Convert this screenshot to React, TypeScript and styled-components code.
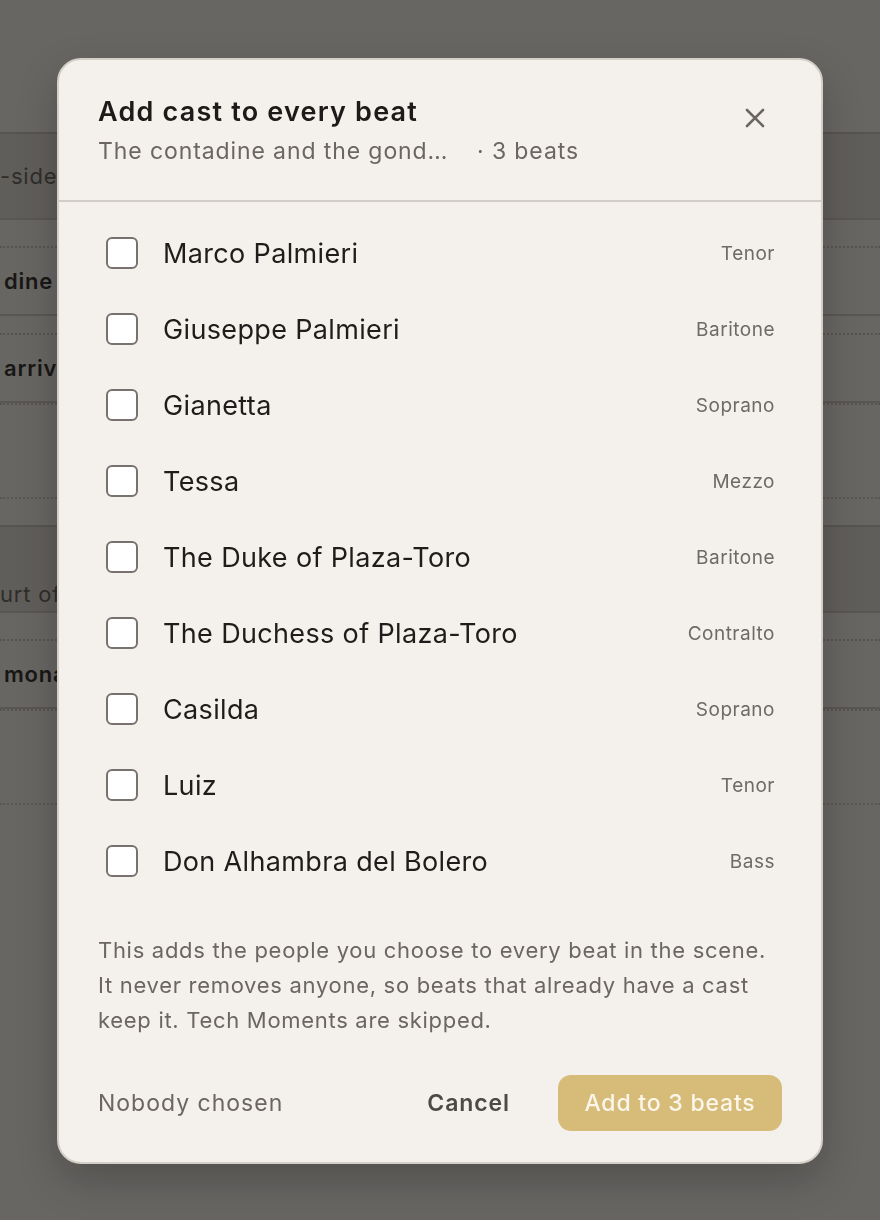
import React from "react";
import styled, { createGlobalStyle } from "styled-components";

type Person = { name: string; voice: string };

const cast: Person[] = [
  { name: "Marco Palmieri", voice: "Tenor" },
  { name: "Giuseppe Palmieri", voice: "Baritone" },
  { name: "Gianetta", voice: "Soprano" },
  { name: "Tessa", voice: "Mezzo" },
  { name: "The Duke of Plaza-Toro", voice: "Baritone" },
  { name: "The Duchess of Plaza-Toro", voice: "Contralto" },
  { name: "Casilda", voice: "Soprano" },
  { name: "Luiz", voice: "Tenor" },
  { name: "Don Alhambra del Bolero", voice: "Bass" },
];

type BackRow = { kind: "scene" | "beat" | "tech"; text: string; gap?: number; low?: boolean };

const backRows: BackRow[] = [
  { kind: "scene", text: "-side, Venice" },
  { kind: "beat", text: "dine arrive", gap: 26 },
  { kind: "beat", text: "arrival of the gondolieri", gap: 17 },
  { kind: "tech", text: "" },
  { kind: "scene", text: "urt of Barataria", gap: 26, low: true },
  { kind: "beat", text: "monarchy", gap: 26 },
  { kind: "tech", text: "" },
];

const GlobalStyle = createGlobalStyle`
  html, body {
    margin: 0;
    padding: 0;
    height: 100%;
  }
  body {
    font-family: Inter, "Noto Sans", sans-serif;
    background: #f4f1ec;
    -webkit-font-smoothing: antialiased;
  }
  * { box-sizing: border-box; }
`;

/* page that sits behind the dialog */

const Page = styled.div`
  min-height: 1220px;
  background: #f1eee9;
  padding-top: 132px;
`;

const BackList = styled.div`
  display: flex;
  flex-direction: column;
`;

const BackItem = styled.div<{ $kind: BackRow["kind"]; $gap: number; $low: boolean }>`
  display: flex;
  align-items: ${(p) => (p.$low ? "flex-end" : "center")};
  padding-bottom: ${(p) => (p.$low ? 4 : 0)}px;
  height: ${(p) => (p.$kind === "scene" ? 88 : p.$kind === "tech" ? 96 : 70)}px;
  margin-top: ${(p) => p.$gap}px;
  background: ${(p) => (p.$kind === "scene" ? "#dcd8d3" : "transparent")};
  border-top: 2px ${(p) => (p.$kind === "scene" ? "solid" : "dotted")} #c2bdb6;
  border-bottom: 2px ${(p) => (p.$kind === "tech" ? "dotted" : "solid")} #c9c4bd;
  padding-left: ${(p) => (p.$kind === "beat" ? 4 : 0)}px;
  font-size: 22px;
  letter-spacing: 0.8px;
  font-weight: ${(p) => (p.$kind === "beat" ? 600 : 400)};
  color: ${(p) => (p.$kind === "beat" ? "#1b1a18" : "#5a5652")};
  white-space: nowrap;
`;

const Overlay = styled.div`
  position: fixed;
  inset: 0;
  background: rgba(24, 22, 20, 0.63);
  display: flex;
  align-items: center;
  justify-content: center;
`;

/* dialog */

const Dialog = styled.div`
  width: 766px;
  height: 1106px;
  margin-top: 2px;
  background: #f4f1ec;
  border: 2px solid #d3cec6;
  border-radius: 24px;
  box-shadow: 0 16px 40px rgba(0, 0, 0, 0.22);
  display: flex;
  flex-direction: column;
  overflow: hidden;
`;

const Header = styled.div`
  display: flex;
  align-items: flex-start;
  justify-content: space-between;
  padding: 34px 46px 0 39px;
  height: 142px;
  border-bottom: 2px solid #d2cdc6;
`;

const Heading = styled.div`
  display: flex;
  flex-direction: column;
  gap: 5px;
`;

const Title = styled.h2`
  margin: 0;
  font-size: 27px;
  line-height: 36px;
  font-weight: 600;
  letter-spacing: 1.2px;
  color: #1d1b19;
`;

const Sub = styled.div`
  display: flex;
  align-items: baseline;
  gap: 22px;
  font-size: 23px;
  line-height: 32px;
  letter-spacing: 0.9px;
  color: #6b6661;
`;

const SceneName = styled.span`
  display: inline-block;
  max-width: 357px;
  overflow: hidden;
  text-overflow: ellipsis;
  white-space: nowrap;
`;

const CloseButton = styled.button`
  width: 40px;
  height: 40px;
  margin-top: 4px;
  border: none;
  background: transparent;
  padding: 0;
  display: flex;
  align-items: center;
  justify-content: center;
  color: #6b6661;
  cursor: pointer;
`;

const List = styled.div`
  display: flex;
  flex-direction: column;
  padding: 13px 46px 0 47px;
`;

const Row = styled.label`
  display: flex;
  align-items: center;
  height: 76px;
  cursor: pointer;
`;

const Check = styled.input.attrs({ type: "checkbox" })`
  appearance: none;
  margin: 0 25px 0 0;
  width: 32px;
  height: 32px;
  flex: none;
  background: #ffffff;
  border: 2px solid #77726d;
  border-radius: 6px;
`;

const Name = styled.span`
  flex: 1;
  font-size: 27px;
  letter-spacing: 0.35px;
  color: #1f1d1b;
`;

const Voice = styled.span`
  font-size: 19px;
  letter-spacing: 0.5px;
  color: #6e6a66;
`;

const Note = styled.p`
  margin: 34px 0 0;
  padding: 0 39px;
  font-size: 22px;
  line-height: 35px;
  letter-spacing: 0.7px;
  color: #6b6661;
`;

const Footer = styled.div`
  margin-top: auto;
  display: flex;
  align-items: center;
  padding: 0 39px 31px 39px;
`;

const Status = styled.span`
  flex: 1;
  font-size: 23px;
  letter-spacing: 1px;
  color: #6b6661;
`;

const Ghost = styled.button`
  border: none;
  background: transparent;
  font-family: inherit;
  font-size: 23px;
  font-weight: 600;
  letter-spacing: 0.9px;
  color: #4d4945;
  padding: 0;
  margin-right: 48px;
  cursor: pointer;
`;

const Primary = styled.button`
  height: 56px;
  width: 224px;
  border: none;
  border-radius: 13px;
  background: #d7bb79;
  font-family: inherit;
  font-size: 23px;
  font-weight: 500;
  letter-spacing: 0.8px;
  color: #fbf6ea;
  cursor: default;
`;

export default function App() {
  return (
    <>
      <GlobalStyle />
      <Page>
        <BackList>
          {backRows.map((r, i) => (
            <BackItem key={i} $kind={r.kind} $gap={r.gap ?? 0} $low={!!r.low}>
              {r.text}
            </BackItem>
          ))}
        </BackList>
      </Page>
      <Overlay>
        <Dialog role="dialog" aria-label="Add cast to every beat">
          <Header>
            <Heading>
              <Title>Add cast to every beat</Title>
              <Sub>
                <SceneName>The contadine and the gondolieri</SceneName>
                <span>· 3 beats</span>
              </Sub>
            </Heading>
            <CloseButton aria-label="Close">
              <svg width="22" height="22" viewBox="0 0 22 22" fill="none">
                <path d="M3 3L19 19M19 3L3 19" stroke="currentColor" strokeWidth="2.6" strokeLinecap="round" />
              </svg>
            </CloseButton>
          </Header>
          <List>
            {cast.map((p) => (
              <Row key={p.name}>
                <Check />
                <Name>{p.name}</Name>
                <Voice>{p.voice}</Voice>
              </Row>
            ))}
          </List>
          <Note>
            This adds the people you choose to every beat in the scene. It never removes anyone, so beats that
            already have a cast keep it. Tech Moments are skipped.
          </Note>
          <Footer>
            <Status>Nobody chosen</Status>
            <Ghost>Cancel</Ghost>
            <Primary disabled>Add to 3 beats</Primary>
          </Footer>
        </Dialog>
      </Overlay>
    </>
  );
}
